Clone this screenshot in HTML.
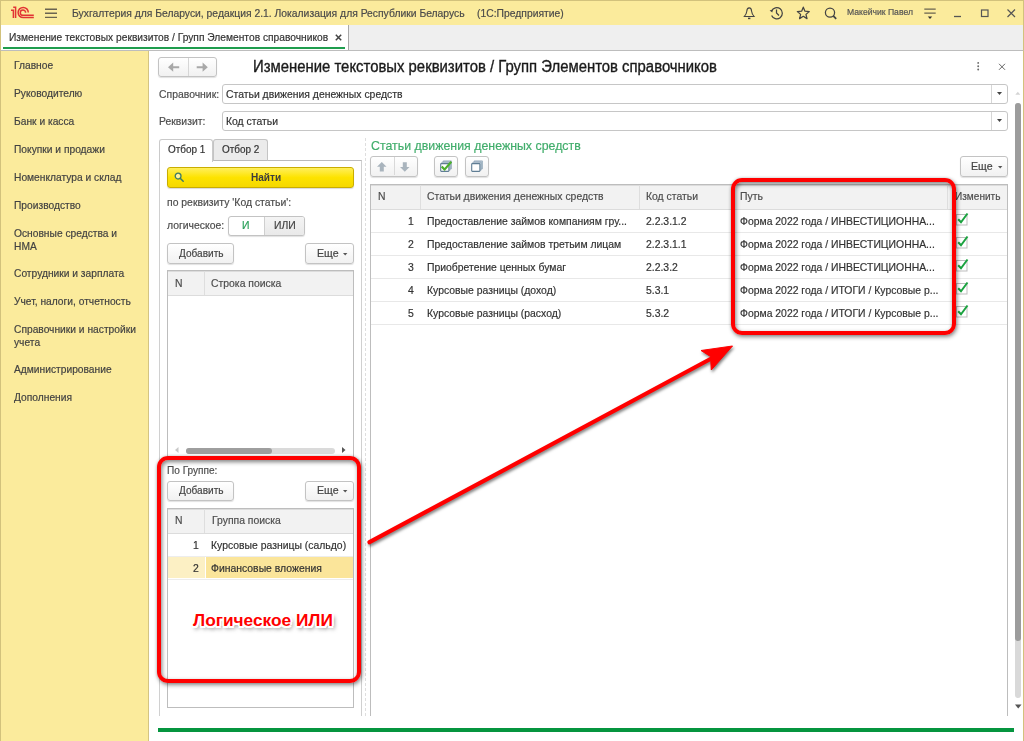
<!DOCTYPE html>
<html><head><meta charset="utf-8">
<style>
*{box-sizing:border-box;margin:0;padding:0}
html,body{width:1024px;height:741px;overflow:hidden;background:#fff}
body{position:relative;font-family:"Liberation Sans",sans-serif;font-size:10.25px;color:#4d4d4d}
.a{position:absolute}
.t{position:absolute;white-space:nowrap;line-height:13px;font-size:11.2px;transform:scaleX(.93);transform-origin:0 0;-webkit-text-stroke:0.2px currentColor}
#hdr{left:0;top:0;width:1024px;height:25px;background:#fbeb9c;border:1px solid #d2c27c;border-bottom:none}
#tabs{left:0;top:25px;width:1024px;height:26px;background:#efefef;border-left:1px solid #d2c27c;border-right:1px solid #d2c27c;border-bottom:1px solid #bdbdbd}
#side{left:0;top:51px;width:149px;height:690px;background:#fbeb9c;border-left:1px solid #d2c27c;border-right:1px solid #d4c482}
#rb{left:1023px;top:51px;width:1px;height:690px;background:#d2c27c}
.btn{position:absolute;border:1px solid #c3c3c3;border-radius:3px;background:linear-gradient(#fff,#f1f1f1);box-shadow:0 1px 1px rgba(0,0,0,.12);color:#4d4d4d;text-align:center}
.inp{position:absolute;border:1px solid #c6c6c6;border-radius:3px;background:#fff}
.grid{position:absolute;border:1px solid #bdbdbd;background:#fff;overflow:hidden}
.gh{position:absolute;left:0;top:0;right:0;height:24px;background:#f2f2f2;border-bottom:1px solid #dcdcdc}
.rl{position:absolute;left:0;right:0;height:1px;background:#e8e8e8}
.red{position:absolute;border:4px solid #ff0000;border-radius:11px;box-shadow:1px 2px 4px rgba(0,0,0,.45),0 0 3px rgba(0,0,0,.15),inset 1px 2px 4px rgba(0,0,0,.5)}
.si{left:13.5px;color:#424242;transform:scaleX(.915)}
</style></head><body>

<!-- header -->
<div id="hdr" class="a"></div>
<div id="tabs" class="a"></div>
<div id="side" class="a"></div>
<div id="rb" class="a"></div>

<!-- header content -->
<svg class="a" style="left:0;top:0" width="40" height="24" viewBox="0 0 40 24">
<g fill="none" stroke="#e23434" stroke-width="1.5">
<path d="M11 10.3 H13.4 V17.9"/>
<path d="M13.2 7.3 H15.6 V17.9"/>
<path d="M33.8 17.6 H23.2 A5.1 5.1 0 0 1 23.2 7.4 A5.1 5.1 0 0 1 28.3 12.5"/>
<path d="M33.8 15.3 H22.95 A2.65 2.65 0 0 1 22.95 10 A2.65 2.65 0 0 1 25.6 12.65"/>
</g></svg>
<svg class="a" style="left:45px;top:8px" width="12" height="11" viewBox="0 0 12 11">
<g stroke="#6a6450" stroke-width="1.4"><path d="M0 1.2H12M0 5.2H12M0 9.4H12"/></g></svg>
<div class="t" style="left:72px;top:6.7px;color:#4a4a4a;transform:scaleX(.925)">Бухгалтерия для Беларуси, редакция 2.1. Локализация для Республики Беларусь</div>
<div class="t" style="left:476.5px;top:6.7px;color:#4a4a4a;transform:scaleX(.925)">(1С:Предприятие)</div>
<svg class="a" style="left:743px;top:6px" width="100" height="14" viewBox="0 0 100 14">
<g fill="none" stroke="#444" stroke-width="1.25">
<path d="M6.2 1.9 C4.3 1.9 3.9 3.2 3.8 5.2 C3.6 7.6 2.6 8.9 1.3 10.5 H11.1 C9.8 8.9 8.8 7.6 8.6 5.2 C8.5 3.2 8.1 1.9 6.2 1.9 Z" stroke-width="1.1"/><path d="M5 12.4 H7.4" stroke-width="1.5"/>
<path d="M28.6 5.0 A5.6 5.6 0 1 1 28.6 9.5"/><path d="M33.5 3.5 V7 L36 9.5"/>
<path d="M60.30 1.20 L61.95 5.23 L66.29 5.55 L62.96 8.37 L64.00 12.60 L60.30 10.30 L56.60 12.60 L57.64 8.37 L54.31 5.55 L58.65 5.23Z" stroke-linejoin="round"/>
<circle cx="87" cy="6.6" r="4.6"/><path d="M90.3 9.9 L93.2 12.8" stroke-width="1.8"/>
</g><path d="M26.6 4.6 L29.8 3.4 L29.3 6.6 Z" fill="#444"/></svg>
<div class="t" style="left:847.3px;top:5.8px;font-size:9.25px;color:#555">Макейчик Павел</div>
<svg class="a" style="left:924px;top:8px" width="92" height="11" viewBox="0 0 92 11">
<g fill="none" stroke="#555" stroke-width="1.1">
<path d="M0.3 1.2H11.7M0.3 5.2H11.7" stroke="#6a6450" stroke-width="1.3"/>
<path d="M30 8.5H37" stroke-width="1.3"/>
<rect x="57.5" y="2" width="6.5" height="6.5" stroke-width="1.2"/>
<path d="M83.5 1.5L91 9M91 1.5L83.5 9" stroke-width="1.2"/>
</g><path d="M3.8 8.6H8.2L6 11Z" fill="#333"/></svg>
<!-- tab -->
<div class="a" style="left:1px;top:25px;width:347.5px;height:25px;background:#fff;border-right:1px solid #a8a8a8"></div>
<div class="t" style="left:9px;top:30.5px;color:#333;transform:scaleX(.915)">Изменение текстовых реквизитов / Групп Элементов справочников</div>
<svg class="a" style="left:335px;top:34px" width="7" height="7" viewBox="0 0 7 7"><path d="M0.8 0.8L6.2 6.2M6.2 0.8L0.8 6.2" stroke="#444" stroke-width="1.5"/></svg>
<div class="a" style="left:3px;top:46.7px;width:342px;height:2px;background:#1f9d4e"></div>
<!-- main -->
<div class="btn" style="left:158px;top:57px;width:59px;height:20px"></div>
<div class="a" style="left:188px;top:58px;width:1px;height:18px;background:#d6d6d6"></div>
<svg class="a" style="left:160px;top:57px" width="55" height="20" viewBox="160 57 55 20"><g fill="#a8a8a8"><path d="M168 67.2 L173.2 62.6 L173.2 66.2 H179.2 V68.2 H173.2 V71.8 Z"/><path d="M207.8 67.2 L202.6 62.6 V66.2 H196.7 V68.2 H202.6 V71.8 Z"/></g></svg>
<div class="t" style="left:253px;top:58.4px;font-size:16px;line-height:18px;color:#1a1a1a;-webkit-text-stroke:0.35px #1a1a1a">Изменение текстовых реквизитов / Групп Элементов справочников</div>
<svg class="a" style="left:976px;top:61px" width="4" height="11"><g fill="#6a6a6a"><circle cx="2.2" cy="1.9" r="0.95"/><circle cx="2.2" cy="5.2" r="0.95"/><circle cx="2.2" cy="8.5" r="0.95"/></g></svg>
<svg class="a" style="left:998px;top:63px" width="8" height="8" viewBox="0 0 8 8"><path d="M1 0.8L7 6.8M7 0.8L1 6.8" stroke="#666" stroke-width="1"/></svg>

<div class="t" style="left:158.5px;top:88.3px">Справочник:</div>
<div class="inp" style="left:222px;top:84px;width:786px;height:20px"></div>
<div class="a" style="left:991px;top:85px;width:1px;height:18px;background:#d6d6d6"></div>
<svg class="a" style="left:996.5px;top:92px" width="6" height="4"><path d="M0 0H5L2.5 3Z" fill="#444"/></svg>
<div class="t" style="left:225.5px;top:88.3px;color:#333">Статьи движения денежных средств</div>

<div class="t" style="left:158.5px;top:115.2px">Реквизит:</div>
<div class="inp" style="left:222px;top:111px;width:786px;height:20px"></div>
<div class="a" style="left:991px;top:112px;width:1px;height:18px;background:#d6d6d6"></div>
<svg class="a" style="left:996.5px;top:119px" width="6" height="4"><path d="M0 0H5L2.5 3Z" fill="#444"/></svg>
<div class="t" style="left:225.5px;top:115.2px;color:#333">Код статьи</div>

<!-- left tabs -->
<div class="a" style="left:159px;top:160px;width:203px;height:556px;border:1px solid #d0d0d0;border-top-color:#bababa;border-bottom:none"></div>
<div class="a" style="left:212.5px;top:139px;width:55px;height:22px;background:#ebebeb;border:1px solid #c4c4c4;border-bottom-color:#bababa;border-radius:3px 3px 0 0"></div>
<div class="a" style="left:159px;top:138.5px;width:54px;height:23px;background:#fff;border:1px solid #cacaca;border-bottom:none;border-radius:3px 3px 0 0"></div>
<div class="t" style="left:167.6px;top:142.6px;color:#333;transform:scaleX(.89)">Отбор 1</div>
<div class="t" style="left:221.5px;top:142.6px;color:#333;transform:scaleX(.89)">Отбор 2</div>

<div class="a" style="left:167px;top:167px;width:187px;height:21px;border:1px solid #c9ad00;border-radius:3px;background:linear-gradient(#ffef5c,#fde300 50%,#f5d800);box-shadow:0 1px 1px rgba(0,0,0,.15)"></div>
<svg class="a" style="left:173px;top:171px" width="12" height="12" viewBox="0 0 12 12"><circle cx="5.1" cy="5.1" r="2.9" fill="#fff29a" stroke="#3d7a68" stroke-width="1.3"/><path d="M7.2 7.2L10.2 10.2" stroke="#3d7a68" stroke-width="1.5" stroke-linecap="round"/></svg>
<div class="t" style="left:251px;top:171.3px;font-weight:bold;color:#3d3d3d;transform:scaleX(.9);-webkit-text-stroke:0">Найти</div>

<div class="t" style="left:167.4px;top:196.3px">по реквизиту 'Код статьи':</div>
<div class="t" style="left:167.4px;top:218.5px">логическое:</div>
<div class="btn" style="left:228px;top:216px;width:77px;height:20px;background:#fff"></div>
<div class="a" style="left:264px;top:217px;width:40px;height:18px;background:linear-gradient(#f4f4f4,#e9e9e9);border-left:1px solid #cfcfcf;border-radius:0 2px 2px 0"></div>
<div class="t" style="left:242px;top:218.7px;color:#2aa05a">И</div>
<div class="t" style="left:273.5px;top:218.7px;color:#444">ИЛИ</div>

<div class="btn" style="left:167px;top:243px;width:67px;height:21px"></div>
<div class="t" style="left:178.5px;top:247px;color:#444;transform:scaleX(.9)">Добавить</div>
<div class="btn" style="left:305px;top:243px;width:48.5px;height:21px"></div>
<div class="t" style="left:316.5px;top:247px;color:#444;transform:scaleX(.95)">Еще</div>
<svg class="a" style="left:343.3px;top:253.2px" width="5" height="3"><path d="M0 0H4.4L2.2 2.4Z" fill="#555"/></svg>

<div class="grid" style="left:167px;top:270px;width:187px;height:190px">
 <div class="gh" style="height:25px;box-shadow:inset 0 1px 0 #dcdcdc"></div>
 <div class="a" style="left:35.8px;top:0;width:1px;height:24px;background:#dedede"></div>
</div>
<div class="t" style="left:174.6px;top:276.5px">N</div>
<div class="t" style="left:211.2px;top:276.5px">Строка поиска</div>
<!-- h scrollbar -->
<svg class="a" style="left:175px;top:447px" width="4" height="6"><path d="M3.5 0V6L0 3Z" fill="#c8c8c8"/></svg>
<div class="a" style="left:185.5px;top:447.5px;width:149px;height:6px;border-radius:3px;background:#dadada"></div>
<div class="a" style="left:185.5px;top:447.5px;width:86px;height:6px;border-radius:3px;background:#9e9e9e"></div>
<svg class="a" style="left:342px;top:447px" width="4" height="6"><path d="M0 0V6L3.5 3Z" fill="#555"/></svg>
<div class="a" style="left:162px;top:459px;width:197px;height:1px;border-top:1px dashed #d8d8d8"></div>

<div class="t" style="left:167.3px;top:464.1px;transform:scaleX(.9)">По Группе:</div>
<div class="btn" style="left:167px;top:480.5px;width:67px;height:20px"></div>
<div class="t" style="left:178.5px;top:484px;color:#444;transform:scaleX(.9)">Добавить</div>
<div class="btn" style="left:305px;top:480.5px;width:49px;height:20px"></div>
<div class="t" style="left:316.5px;top:484px;color:#444;transform:scaleX(.95)">Еще</div>
<svg class="a" style="left:343.3px;top:490.2px" width="5" height="3"><path d="M0 0H4.4L2.2 2.4Z" fill="#555"/></svg>

<div class="grid" style="left:167px;top:508px;width:187px;height:200px">
 <div class="gh" style="height:24.5px;box-shadow:inset 0 1px 0 #dcdcdc"></div>
 <div class="a" style="left:35.8px;top:0;width:1px;height:24px;background:#dedede"></div>
 <div class="rl" style="top:47px;background:#ededed"></div>
 <div class="a" style="left:0;top:48px;width:36.5px;height:21px;background:#fcf0c4"></div>
 <div class="a" style="left:37.5px;top:48px;width:150px;height:21px;background:#fbe59a"></div>
 <div class="rl" style="top:70px;background:#ededed"></div>
</div>
<div class="t" style="left:174.6px;top:513.7px">N</div>
<div class="t" style="left:211.8px;top:513.7px">Группа поиска</div>
<div class="t" style="left:193px;top:539px;color:#333">1</div>
<div class="t" style="left:211.2px;top:539px;color:#333">Курсовые разницы (сальдо)</div>
<div class="t" style="left:193px;top:562px;color:#333">2</div>
<div class="t" style="left:211.2px;top:562px;color:#333">Финансовые вложения</div>

<!-- splitter -->
<div class="a" style="left:365px;top:138px;width:1px;height:578px;border-left:1px dashed #dedede"></div>
<!-- right panel -->
<div class="t" style="left:370.8px;top:138px;font-size:13.3px;line-height:15px;color:#41ad6b">Статьи движения денежных средств</div>
<div class="btn" style="left:370px;top:155.8px;width:47.5px;height:21px"></div>
<div class="a" style="left:394px;top:156.8px;width:1px;height:18.6px;background:#d9d9d9"></div>
<svg class="a" style="left:376px;top:161.6px" width="34" height="10" viewBox="0 0 34 10"><g fill="#a9b4bd"><path d="M5.8 0L10.5 4.8H7.8V9.5H3.8V4.8H1Z"/><path d="M28.8 9.8L33.5 5H30.8V0.3H26.8V5H24Z"/></g></svg>
<div class="btn" style="left:434px;top:155.8px;width:24px;height:21px"></div>
<svg class="a" style="left:439px;top:160px" width="14" height="13" viewBox="0 0 14 13">
<path d="M4.2 0.9H12.4V8.9H11V2.3H4.2Z" fill="#c3d1dc" stroke="#8fa5b6" stroke-width="0.8"/>
<path d="M2.9 2.2H11.1V10.2H9.7V3.6H2.9Z" fill="#d5e0e8" stroke="#8fa5b6" stroke-width="0.8"/>
<rect x="1.7" y="3.6" width="8.2" height="7.8" rx="0.6" fill="#fff" stroke="#5f7d94" stroke-width="1.1"/>
<path d="M2.7 6.6L5.5 9.6L12.3 1.8" fill="none" stroke="#4caf2c" stroke-width="2.2" stroke-linejoin="round"/></svg>
<div class="btn" style="left:465px;top:155.8px;width:24px;height:21px"></div>
<svg class="a" style="left:470px;top:160px" width="14" height="13" viewBox="0 0 14 13">
<path d="M4.2 0.9H12.4V8.9H11V2.3H4.2Z" fill="#c3d1dc" stroke="#8fa5b6" stroke-width="0.8"/>
<path d="M2.9 2.2H11.1V10.2H9.7V3.6H2.9Z" fill="#d5e0e8" stroke="#8fa5b6" stroke-width="0.8"/>
<rect x="1.7" y="3.6" width="8.2" height="7.8" rx="0.6" fill="#fff" stroke="#5f7d94" stroke-width="1.1"/></svg>
<div class="btn" style="left:959.5px;top:156px;width:48.5px;height:21px"></div>
<div class="t" style="left:970.5px;top:159.5px;color:#444;transform:scaleX(.95)">Еще</div>
<svg class="a" style="left:998.2px;top:166px" width="5" height="3"><path d="M0 0H4.4L2.2 2.4Z" fill="#555"/></svg>

<div class="grid" style="left:370px;top:184px;width:638px;height:532px;border-bottom:none">
 <div class="gh" style="height:25px;box-shadow:inset 0 1px 0 #dcdcdc"></div>
 <div class="a" style="left:48.5px;top:0;width:1px;height:24px;background:#dedede"></div>
 <div class="a" style="left:267.5px;top:0;width:1px;height:24px;background:#dedede"></div>
 <div class="a" style="left:362.5px;top:0;width:1px;height:24px;background:#dedede"></div>
 <div class="a" style="left:576px;top:0;width:1px;height:24px;background:#dedede"></div>
 <div class="rl" style="top:46.5px"></div>
 <div class="rl" style="top:69.7px"></div>
 <div class="rl" style="top:92.9px"></div>
 <div class="rl" style="top:116.1px"></div>
 <div class="rl" style="top:139.3px"></div>
</div>
<div class="t" style="left:377.5px;top:189.8px">N</div>
<div class="t" style="left:426.7px;top:189.8px">Статьи движения денежных средств</div>
<div class="t" style="left:645.6px;top:189.8px">Код статьи</div>
<div class="t" style="left:739.6px;top:189.8px">Путь</div>
<div class="t" style="left:954.8px;top:189.8px;transform:scaleX(.9)">Изменить</div>
<div class="t" style="left:407.7px;top:214.5px;color:#333">1</div>
<div class="t" style="left:426.7px;top:214.5px;color:#333">Предоставление займов компаниям гру...</div>
<div class="t" style="left:645.6px;top:214.5px;color:#333">2.2.3.1.2</div>
<div class="t" style="left:739.6px;top:214.5px;color:#333">Форма 2022 года / ИНВЕСТИЦИОННА...</div>
<svg class="a" style="left:955px;top:211.5px" width="14" height="14" viewBox="0 0 14 14"><rect x="1.5" y="2.5" width="10.5" height="10.5" fill="#fff" stroke="#bdbdbd"/><path d="M3.2 7.3L6 10.3L12.5 1.5" fill="none" stroke="#1aa33f" stroke-width="2"/></svg>
<div class="t" style="left:407.7px;top:237.7px;color:#333">2</div>
<div class="t" style="left:426.7px;top:237.7px;color:#333">Предоставление займов третьим лицам</div>
<div class="t" style="left:645.6px;top:237.7px;color:#333">2.2.3.1.1</div>
<div class="t" style="left:739.6px;top:237.7px;color:#333">Форма 2022 года / ИНВЕСТИЦИОННА...</div>
<svg class="a" style="left:955px;top:234.7px" width="14" height="14" viewBox="0 0 14 14"><rect x="1.5" y="2.5" width="10.5" height="10.5" fill="#fff" stroke="#bdbdbd"/><path d="M3.2 7.3L6 10.3L12.5 1.5" fill="none" stroke="#1aa33f" stroke-width="2"/></svg>
<div class="t" style="left:407.7px;top:260.9px;color:#333">3</div>
<div class="t" style="left:426.7px;top:260.9px;color:#333">Приобретение ценных бумаг</div>
<div class="t" style="left:645.6px;top:260.9px;color:#333">2.2.3.2</div>
<div class="t" style="left:739.6px;top:260.9px;color:#333">Форма 2022 года / ИНВЕСТИЦИОННА...</div>
<svg class="a" style="left:955px;top:257.9px" width="14" height="14" viewBox="0 0 14 14"><rect x="1.5" y="2.5" width="10.5" height="10.5" fill="#fff" stroke="#bdbdbd"/><path d="M3.2 7.3L6 10.3L12.5 1.5" fill="none" stroke="#1aa33f" stroke-width="2"/></svg>
<div class="t" style="left:407.7px;top:284.1px;color:#333">4</div>
<div class="t" style="left:426.7px;top:284.1px;color:#333">Курсовые разницы (доход)</div>
<div class="t" style="left:645.6px;top:284.1px;color:#333">5.3.1</div>
<div class="t" style="left:739.6px;top:284.1px;color:#333">Форма 2022 года / ИТОГИ / Курсовые р...</div>
<svg class="a" style="left:955px;top:281.1px" width="14" height="14" viewBox="0 0 14 14"><rect x="1.5" y="2.5" width="10.5" height="10.5" fill="#fff" stroke="#bdbdbd"/><path d="M3.2 7.3L6 10.3L12.5 1.5" fill="none" stroke="#1aa33f" stroke-width="2"/></svg>
<div class="t" style="left:407.7px;top:307.3px;color:#333">5</div>
<div class="t" style="left:426.7px;top:307.3px;color:#333">Курсовые разницы (расход)</div>
<div class="t" style="left:645.6px;top:307.3px;color:#333">5.3.2</div>
<div class="t" style="left:739.6px;top:307.3px;color:#333">Форма 2022 года / ИТОГИ / Курсовые р...</div>
<svg class="a" style="left:955px;top:304.3px" width="14" height="14" viewBox="0 0 14 14"><rect x="1.5" y="2.5" width="10.5" height="10.5" fill="#fff" stroke="#bdbdbd"/><path d="M3.2 7.3L6 10.3L12.5 1.5" fill="none" stroke="#1aa33f" stroke-width="2"/></svg>

<!-- v scrollbar -->
<svg class="a" style="left:1015px;top:91px" width="6" height="5"><path d="M0.3 3.8H5.3L2.8 0.8Z" fill="#d4d4d4"/></svg>
<div class="a" style="left:1014.5px;top:102.5px;width:6.5px;height:595px;border-radius:3.25px;background:#d9d9d9"></div>
<div class="a" style="left:1014.5px;top:102.5px;width:6.5px;height:538px;border-radius:3.25px;background:#9c9c9c"></div>
<svg class="a" style="left:1014.5px;top:704px" width="7" height="5"><path d="M0 0.5H6.5L3.25 4.5Z" fill="#555"/></svg>

<div class="a" style="left:158px;top:728px;width:856px;height:4px;background:#05953f"></div>

<!-- annotations -->
<div class="red" style="left:157.3px;top:456.2px;width:203.6px;height:226.6px"></div>
<div class="red" style="left:731.2px;top:178.4px;width:224.8px;height:156.8px"></div>
<svg class="a" style="left:355px;top:330px;filter:drop-shadow(1.5px 2px 1.5px rgba(0,0,0,.5))" width="400" height="230" viewBox="355 330 400 230">
<path d="M369.5 542.2 L716 356" stroke="#ff0000" stroke-width="4.2" stroke-linecap="round" fill="none"/>
<path d="M732.5 346 L701 350.5 L710.5 356.5 L711.3 370 Z" fill="#ff0000" stroke="#ff0000" stroke-width="1" stroke-linejoin="round"/>
</svg>
<div class="t" style="left:193px;top:609.5px;font-size:17.3px;line-height:20px;font-weight:bold;color:#ff0000;transform:none;-webkit-text-stroke:0;text-shadow:-1.5px -1.5px 0.6px #fff,1.5px -1.5px 0.6px #fff,-1.5px 1.5px 0.6px #fff,1.5px 1.5px 0.6px #fff,0px -2px 0.6px #fff,0px 2px 0.6px #fff,-2px 0px 0.6px #fff,2px 0px 0.6px #fff,2px 3px 4px rgba(0,0,0,.6)">Логическое ИЛИ</div>
<!-- sidebar items -->
<div class="t si" style="top:59.45px">Главное</div>
<div class="t si" style="top:87.45px">Руководителю</div>
<div class="t si" style="top:114.95px">Банк и касса</div>
<div class="t si" style="top:142.95px">Покупки и продажи</div>
<div class="t si" style="top:170.95px">Номенклатура и склад</div>
<div class="t si" style="top:198.95px">Производство</div>
<div class="t si" style="top:226.95px">Основные средства и<br>НМА</div>
<div class="t si" style="top:266.95px">Сотрудники и зарплата</div>
<div class="t si" style="top:294.95px">Учет, налоги, отчетность</div>
<div class="t si" style="top:322.95px">Справочники и настройки<br>учета</div>
<div class="t si" style="top:362.95px">Администрирование</div>
<div class="t si" style="top:390.95px">Дополнения</div>
</body></html>
